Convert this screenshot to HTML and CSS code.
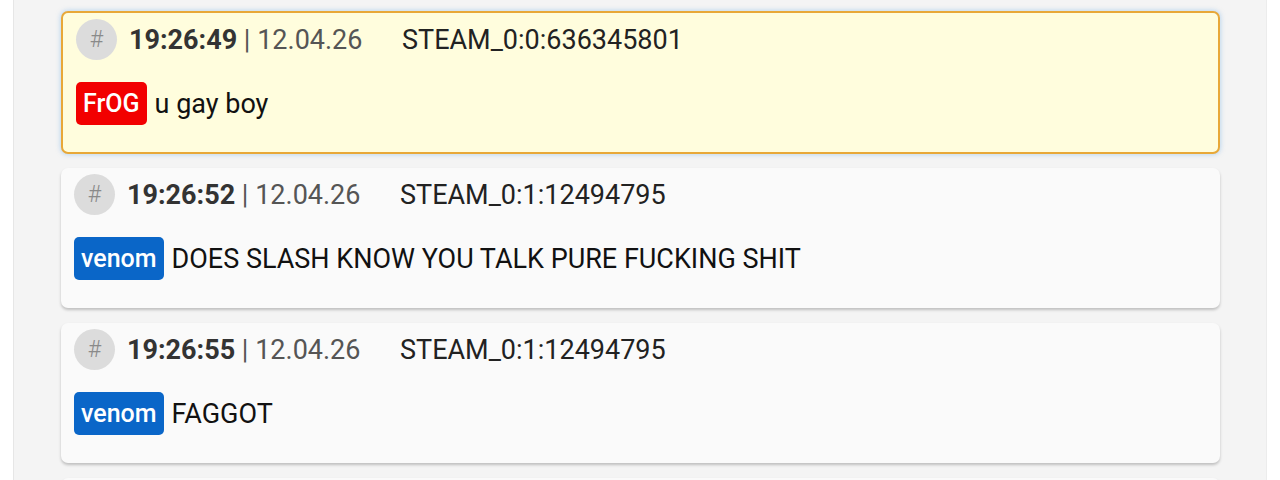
FILE: index.html
```html
<!DOCTYPE html>
<html lang="en">
<head>
    <meta charset="UTF-8">
    <title>Chat log</title>
    <link rel="stylesheet" href="styles.css">
</head>
<body>
    <main class="chat-panel">
        <div class="msg msg-highlight">
            <div class="msg-head">
                <span class="msg-hash">#</span>
                <span class="msg-time"><b>19:26:49</b> | 12.04.26</span>
                <span class="msg-steam">STEAM_0:0:636345801</span>
            </div>
            <div class="msg-body">
                <span class="tag tag-red">FrOG</span>
                <span class="msg-text">u gay boy</span>
            </div>
        </div>

        <div class="msg">
            <div class="msg-head">
                <span class="msg-hash">#</span>
                <span class="msg-time"><b>19:26:52</b> | 12.04.26</span>
                <span class="msg-steam">STEAM_0:1:12494795</span>
            </div>
            <div class="msg-body">
                <span class="tag tag-blue">venom</span>
                <span class="msg-text">DOES SLASH KNOW YOU TALK PURE FUCKING SHIT</span>
            </div>
        </div>

        <div class="msg">
            <div class="msg-head">
                <span class="msg-hash">#</span>
                <span class="msg-time"><b>19:26:55</b> | 12.04.26</span>
                <span class="msg-steam">STEAM_0:1:12494795</span>
            </div>
            <div class="msg-body">
                <span class="tag tag-blue">venom</span>
                <span class="msg-text">FAGGOT</span>
            </div>
        </div>

        <!-- next message, only its top edge is in view -->
        <div class="msg msg-stub"></div>
    </main>
</body>
</html>
```

FILE: styles.css
```css
:root {
    --panel-bg: #f4f4f4;
    --card-bg: #fafafa;
    --highlight-bg: #fffddd;
    --highlight-border: #e8a838;
    --red: #f20000;
    --blue: #0a66c8;
}

* {
    margin: 0;
    padding: 0;
    box-sizing: border-box;
}

body {
    font-family: Roboto, 'Noto Sans', sans-serif;
    background: #fff;
    color: #111;
    height: 480px;
    overflow: hidden;
}

.chat-panel {
    margin: 0 13px;
    height: 480px;
    overflow: hidden;
    background: var(--panel-bg);
    border-left: 1px solid #e6e6e6;
    border-right: 1px solid #ececec;
    padding: 11px 46px 0 47px;
    display: flex;
    flex-direction: column;
    gap: 15px;
}

.msg {
    flex-shrink: 0;
    height: 140px;
    background: var(--card-bg);
    border-radius: 7px;
    padding: 6px 13px 0;
    box-shadow: 0 2px 3px rgba(0, 0, 0, 0.22);
}

.msg-highlight {
    height: 143px;
    margin-bottom: -1px;
    background: var(--highlight-bg);
    border: 2px solid var(--highlight-border);
    box-shadow: 0 0 4px 1px rgba(140, 190, 235, 0.5);
}

.msg-head {
    display: flex;
    align-items: center;
    height: 41px;
    font-size: 27px;
}

.msg-hash {
    width: 41px;
    height: 41px;
    border-radius: 50%;
    background: #dcdcdc;
    color: #8a8a8a;
    font-size: 23px;
    font-weight: 300;
    display: flex;
    align-items: center;
    justify-content: center;
    margin-right: 12px;
}

.msg-time {
    color: #555;
    width: 273px;
}

.msg-time b {
    color: #333;
    font-weight: 700;
}

.msg-steam {
    color: #222;
}

.msg-body {
    display: flex;
    align-items: center;
    gap: 8px;
    margin-top: 22px;
}

.tag {
    color: #fff;
    font-size: 25px;
    font-weight: 500;
    line-height: 43px;
    padding: 0 7px;
    border-radius: 5px;
}

.tag-red {
    background: var(--red);
}

.tag-blue {
    background: var(--blue);
}

.msg-text {
    font-size: 27px;
    color: #111;
}
```
